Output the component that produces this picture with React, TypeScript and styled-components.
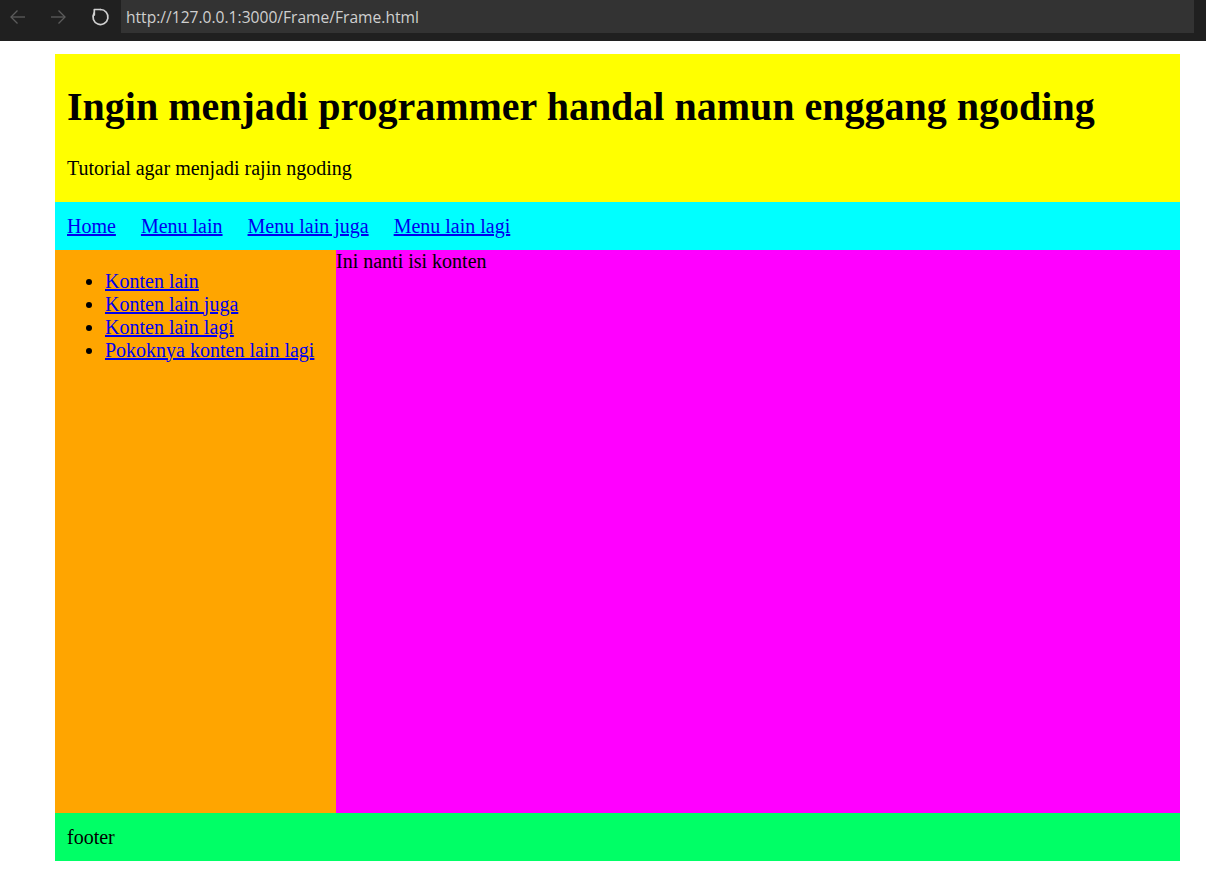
import React from "react";
import styled, { createGlobalStyle } from "styled-components";

const Global = createGlobalStyle`
  html, body { margin: 0; padding: 0; background: #ffffff; }
  body { font-family: "Liberation Serif", "Times New Roman", serif; font-size: 20px; color: #000; }
`;

const Chrome = styled.div`
  height: 41px;
  background: #202020;
  display: flex;
  align-items: flex-start;
  padding-right: 12px;
`;

const NavButtons = styled.div`
  display: flex;
  align-items: center;
  height: 33px;
  width: 121px;
  flex: none;
`;

const IconBtn = styled.div<{ $left: number }>`
  width: 22px;
  height: 22px;
  margin-left: ${(p) => p.$left}px;
  display: flex;
  align-items: center;
  justify-content: center;
`;

const UrlBox = styled.div`
  flex: 1;
  height: 33px;
  background: #333333;
  display: flex;
  align-items: center;
  padding-left: 5px;
  font-family: "Open Sans", "Noto Sans", sans-serif;
  font-size: 15.6px;
  color: #cfcfcf;
`;

const Frame = styled.div`
  width: 1125px;
  margin: 13px 0 0 55px;
`;

const Header = styled.header`
  background: #ffff00;
  padding: 3px 12px 2px;
`;

const Title = styled.h1`
  font-size: 40px;
  line-height: 46px;
  font-weight: bold;
  margin: 26.5px 0 27px;
`;

const Tagline = styled.p`
  font-size: 20px;
  line-height: 23px;
  margin: 0 0 20px;
`;

const Nav = styled.nav`
  background: #00ffff;
  padding: 13.5px 12px 11.5px;
  display: flex;
  gap: 25px;
  line-height: 23px;
`;

const Link = styled.a`
  color: #0000ee;
  text-decoration: underline;
`;

const Body = styled.div`
  display: flex;
  height: 563px;
`;

const Side = styled.aside`
  width: 281px;
  flex: none;
  background: #ffa500;
`;

const SideList = styled.ul`
  margin: 20px 0 0;
  padding-left: 50px;
  line-height: 23px;
`;

const Main = styled.main`
  flex: 1;
  background: #ff00ff;
  line-height: 23px;
`;

const Footer = styled.footer`
  background: #00ff66;
  padding: 13.5px 12px 11.5px;
  line-height: 23px;
`;

const Arrow = ({ dir, color }: { dir: "left" | "right"; color: string }) => (
  <svg width="18" height="18" viewBox="0 0 18 18" fill="none" stroke={color} strokeWidth="1.3">
    {dir === "left" ? (
      <>
        <path d="M16 9H2" />
        <path d="M8.5 2.5L2 9l6.5 6.5" />
      </>
    ) : (
      <>
        <path d="M2 9h14" />
        <path d="M9.5 2.5L16 9l-6.5 6.5" />
      </>
    )}
  </svg>
);

const Reload = () => (
  <svg width="20" height="22" viewBox="0 0 20 22" fill="none" stroke="#d0d0d0" strokeWidth="1.7" strokeLinecap="round" strokeLinejoin="round">
    <path d="M10.5 3.5A7.5 7.5 0 1 1 4 7.2" />
    <path d="M10.5 3.5H4.3V9" />
  </svg>
);

export default function App() {
  return (
    <>
      <Global />
      <Chrome>
        <NavButtons>
          <IconBtn $left={7}>
            <Arrow dir="left" color="#5c5c5c" />
          </IconBtn>
          <IconBtn $left={18}>
            <Arrow dir="right" color="#5c5c5c" />
          </IconBtn>
          <IconBtn $left={20}>
            <Reload />
          </IconBtn>
        </NavButtons>
        <UrlBox>http://127.0.0.1:3000/Frame/Frame.html</UrlBox>
      </Chrome>
      <Frame>
        <Header>
          <Title>Ingin menjadi programmer handal namun enggang ngoding</Title>
          <Tagline>Tutorial agar menjadi rajin ngoding</Tagline>
        </Header>
        <Nav>
          <Link href="#">Home</Link>
          <Link href="#">Menu lain</Link>
          <Link href="#">Menu lain juga</Link>
          <Link href="#">Menu lain lagi</Link>
        </Nav>
        <Body>
          <Side>
            <SideList>
              <li><Link href="#">Konten lain</Link></li>
              <li><Link href="#">Konten lain juga</Link></li>
              <li><Link href="#">Konten lain lagi</Link></li>
              <li><Link href="#">Pokoknya konten lain lagi</Link></li>
            </SideList>
          </Side>
          <Main>Ini nanti isi konten</Main>
        </Body>
        <Footer>footer</Footer>
      </Frame>
    </>
  );
}
